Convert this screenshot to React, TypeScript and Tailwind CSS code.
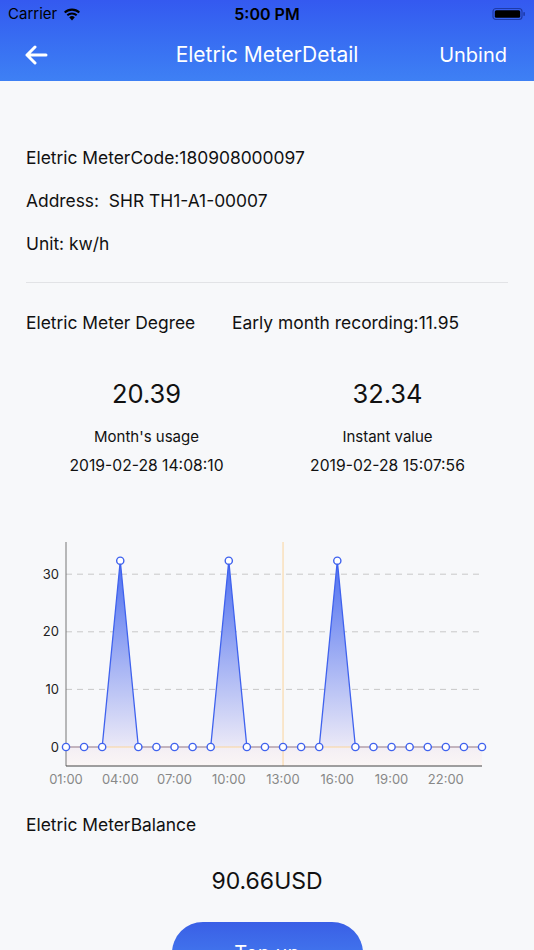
import React from 'react';

const FONT = { fontFamily: 'Inter, "Noto Sans", sans-serif' };

// 24 hourly readings, 01:00 .. 24:00
const readings = [0, 0, 0, 32.34, 0, 0, 0, 0, 0, 32.34, 0, 0, 0, 0, 0, 32.34, 0, 0, 0, 0, 0, 0, 0, 0];

const X0 = 66;
const STEP = 18.087;
const Y0 = 216;
const PER = 5.76; // px per unit

const px = (i: number) => X0 + i * STEP;
const py = (v: number) => Y0 - v * PER;

const StatusBar: React.FC = () => (
  <div className="h-[28px] flex items-center justify-between px-[8px] relative">
    <div className="flex items-center gap-[6px] text-[15px] text-black">
      <span>Carrier</span>
      <svg width="18" height="13" viewBox="0 0 18 13">
        <path d="M9 12.5 L6.2 9.3 A4.2 4.2 0 0 1 11.8 9.3 Z" fill="#000" />
        <path d="M3.6 6.6 A7.8 7.8 0 0 1 14.4 6.6 L13 8.1 A5.8 5.8 0 0 0 5 8.1 Z" fill="#000" />
        <path d="M1 3.8 A11.5 11.5 0 0 1 17 3.8 L15.6 5.3 A9.5 9.5 0 0 0 2.4 5.3 Z" fill="#000" />
      </svg>
    </div>
    <span className="absolute left-1/2 -translate-x-1/2 text-[16px] font-semibold text-black">5:00 PM</span>
    <svg width="34" height="14" viewBox="0 0 34 14">
      <rect x="1" y="1.5" width="29" height="11" rx="3" fill="none" stroke="#1e3aa8" strokeWidth="1.2" />
      <rect x="2.8" y="3.2" width="25.4" height="7.6" rx="1.6" fill="#000" />
      <rect x="31.3" y="5" width="1.6" height="4" rx="0.8" fill="#1e3aa8" />
    </svg>
  </div>
);

const Chart: React.FC = () => {
  const peaks = readings
    .map((v, i) => (v > 0 ? i : -1))
    .filter((i) => i >= 0);
  const labels = ['01:00', '04:00', '07:00', '10:00', '13:00', '16:00', '19:00', '22:00'];
  return (
    <svg width="534" height="260" viewBox="0 0 534 260" className="block">
      <defs>
        <linearGradient id="area" x1="0" y1="0" x2="0" y2="1">
          <stop offset="0%" stopColor="#4d6ff0" />
          <stop offset="100%" stopColor="#ebe9f7" />
        </linearGradient>
        <linearGradient id="base" x1="0" y1="0" x2="0" y2="1">
          <stop offset="0%" stopColor="#f3eef4" />
          <stop offset="100%" stopColor="#fbf6f5" />
        </linearGradient>
      </defs>
      {/* grid */}
      {[10, 20, 30].map((v) => (
        <line key={v} x1={X0} x2={482} y1={py(v)} y2={py(v)} stroke="#c8c8c8" strokeDasharray="6 5" strokeWidth="1" />
      ))}
      {[0, 10, 20, 30].map((v) => (
        <text key={v} x={59} y={py(v) + 4.5} textAnchor="end" fontSize="13" fill="#222" style={FONT}>
          {v}
        </text>
      ))}
      {/* area below zero line */}
      <rect x={X0} y={Y0} width={482 - X0} height={235 - Y0} fill="url(#base)" />
      {/* peak areas */}
      {peaks.map((i) => (
        <polygon
          key={i}
          points={`${px(i - 1)},${Y0} ${px(i)},${py(readings[i])} ${px(i + 1)},${Y0}`}
          fill="url(#area)"
        />
      ))}
      {/* axis pointer */}
      <line x1={px(12)} x2={px(12)} y1={11} y2={235} stroke="#fbd59c" strokeWidth="1" />
      <line x1={X0} x2={482} y1={Y0} y2={Y0} stroke="#fbd59c" strokeWidth="1" />
      {/* zero segments */}
      {readings.slice(0, -1).map((v, i) =>
        v === 0 && readings[i + 1] === 0 ? (
          <line key={i} x1={px(i)} x2={px(i + 1)} y1={Y0} y2={Y0} stroke="#a79bb6" strokeWidth="1.3" />
        ) : null
      )}
      {/* peak lines */}
      {peaks.map((i) => (
        <polyline
          key={i}
          points={`${px(i - 1)},${Y0} ${px(i)},${py(readings[i])} ${px(i + 1)},${Y0}`}
          fill="none"
          stroke="#3f62ee"
          strokeWidth="1.3"
        />
      ))}
      {/* axes */}
      <line x1={X0} x2={X0} y1={11} y2={235} stroke="#777" strokeWidth="1" />
      <line x1={X0} x2={482} y1={235} y2={235} stroke="#444" strokeWidth="1" />
      {labels.map((l, k) => (
        <text key={l} x={px(k * 3)} y={253} textAnchor="middle" fontSize="13" fill="#888" style={FONT}>
          {l}
        </text>
      ))}
      {/* markers */}
      {readings.map((v, i) => (
        <circle key={i} cx={px(i)} cy={py(v)} r="3.6" fill="#fff" stroke="#3f62ee" strokeWidth="1.4" />
      ))}
    </svg>
  );
};

const Stat: React.FC<{ value: string; label: string; time: string }> = ({ value, label, time }) => (
  <div className="flex flex-col items-center">
    <div className="text-[25.5px] leading-[30px] text-[#111]">{value}</div>
    <div className="mt-[18px] text-[15px] leading-[20px] text-[#111]">{label}</div>
    <div className="mt-[9px] text-[15.7px] leading-[20px] text-[#111]">{time}</div>
  </div>
);

export default function App() {
  return (
    <div className="w-[534px] h-[950px] overflow-hidden bg-[#f7f8fa]" style={FONT}>
      <header className="h-[81px] bg-gradient-to-b from-[#3459f0] to-[#3e80f4]">
        <StatusBar />
        <div className="h-[53px] flex items-center justify-between pl-[24px] pr-[27px] relative">
          <svg width="24" height="20" viewBox="0 0 24 20">
            <path d="M22 10 H3 M11 2 L3 10 L11 18" fill="none" stroke="#fff" strokeWidth="3" strokeLinecap="round" strokeLinejoin="round" />
          </svg>
          <span className="absolute left-1/2 -translate-x-1/2 text-[21px] text-white">Eletric MeterDetail</span>
          <span className="text-[20px] text-white">Unbind</span>
        </div>
      </header>

      <main className="px-[26px]">
        <div className="pt-[65px] flex flex-col gap-[19px] text-[17.4px] leading-[24px] text-[#111]">
          <div>Eletric MeterCode:180908000097</div>
          <div>Address:&nbsp; SHR TH1-A1-00007</div>
          <div>Unit: kw/h</div>
        </div>
        <div className="mt-[26px] h-px bg-[#e2e3e6]" />
        <div className="mt-[28px] flex text-[17.4px] leading-[24px] text-[#111]">
          <span className="w-[206px]">Eletric Meter Degree</span>
          <span>Early month recording:11.95</span>
        </div>
        <div className="mt-[44px] grid grid-cols-2">
          <Stat value="20.39" label="Month's usage" time="2019-02-28 14:08:10" />
          <Stat value="32.34" label="Instant value" time="2019-02-28 15:07:56" />
        </div>
      </main>

      <div className="mt-[55px]">
        <Chart />
      </div>

      <div className="px-[26px] mt-[22px] text-[17.4px] leading-[24px] text-[#111]">Eletric MeterBalance</div>
      <div className="mt-[29px] text-center text-[23px] leading-[30px] text-[#111]">90.66USD</div>
      <div className="mt-[26px] flex justify-center">
        <button className="w-[191px] h-[62px] shrink-0 rounded-full bg-gradient-to-b from-[#3a5fe6] to-[#4a86f2] text-white text-[20px] leading-[24px] flex justify-center items-center">
          Top up
        </button>
      </div>
    </div>
  );
}
